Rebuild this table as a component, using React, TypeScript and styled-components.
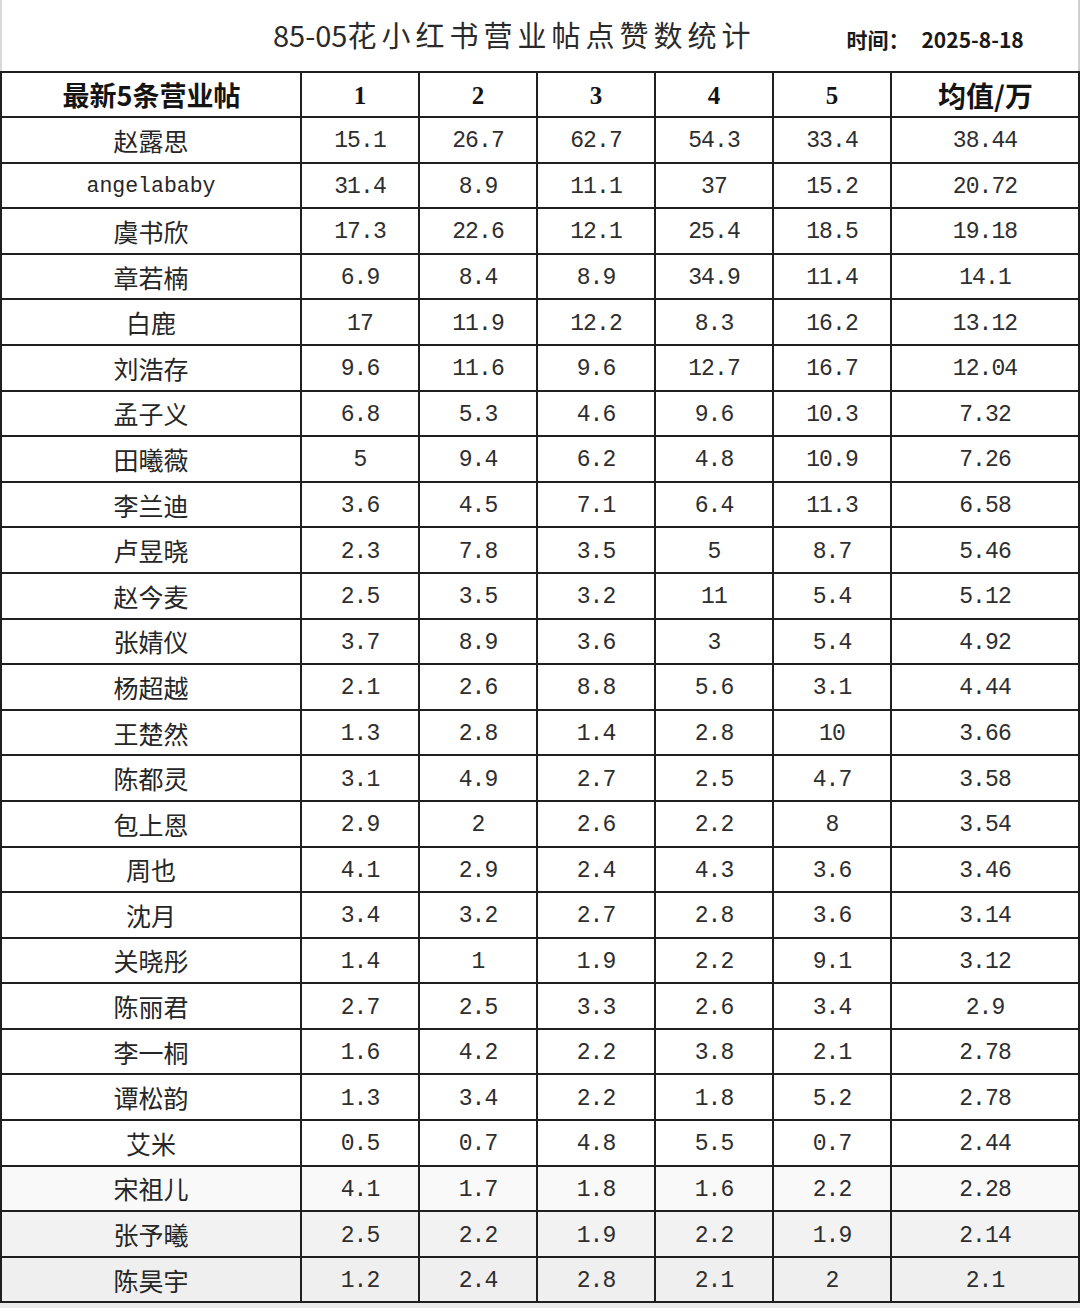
import React from "react";
import styled, { createGlobalStyle } from "styled-components";

const GlobalStyle = createGlobalStyle`
  html, body {
    margin: 0;
    padding: 0;
    background: #ffffff;
  }
  body {
    font-family: "Noto Sans CJK SC", "Noto Sans", sans-serif;
  }
`;

type Row = [string, string, string, string, string, string, string];

const rows: Row[] = [
  ["赵露思", "15.1", "26.7", "62.7", "54.3", "33.4", "38.44"],
  ["angelababy", "31.4", "8.9", "11.1", "37", "15.2", "20.72"],
  ["虞书欣", "17.3", "22.6", "12.1", "25.4", "18.5", "19.18"],
  ["章若楠", "6.9", "8.4", "8.9", "34.9", "11.4", "14.1"],
  ["白鹿", "17", "11.9", "12.2", "8.3", "16.2", "13.12"],
  ["刘浩存", "9.6", "11.6", "9.6", "12.7", "16.7", "12.04"],
  ["孟子义", "6.8", "5.3", "4.6", "9.6", "10.3", "7.32"],
  ["田曦薇", "5", "9.4", "6.2", "4.8", "10.9", "7.26"],
  ["李兰迪", "3.6", "4.5", "7.1", "6.4", "11.3", "6.58"],
  ["卢昱晓", "2.3", "7.8", "3.5", "5", "8.7", "5.46"],
  ["赵今麦", "2.5", "3.5", "3.2", "11", "5.4", "5.12"],
  ["张婧仪", "3.7", "8.9", "3.6", "3", "5.4", "4.92"],
  ["杨超越", "2.1", "2.6", "8.8", "5.6", "3.1", "4.44"],
  ["王楚然", "1.3", "2.8", "1.4", "2.8", "10", "3.66"],
  ["陈都灵", "3.1", "4.9", "2.7", "2.5", "4.7", "3.58"],
  ["包上恩", "2.9", "2", "2.6", "2.2", "8", "3.54"],
  ["周也", "4.1", "2.9", "2.4", "4.3", "3.6", "3.46"],
  ["沈月", "3.4", "3.2", "2.7", "2.8", "3.6", "3.14"],
  ["关晓彤", "1.4", "1", "1.9", "2.2", "9.1", "3.12"],
  ["陈丽君", "2.7", "2.5", "3.3", "2.6", "3.4", "2.9"],
  ["李一桐", "1.6", "4.2", "2.2", "3.8", "2.1", "2.78"],
  ["谭松韵", "1.3", "3.4", "2.2", "1.8", "5.2", "2.78"],
  ["艾米", "0.5", "0.7", "4.8", "5.5", "0.7", "2.44"],
  ["宋祖儿", "4.1", "1.7", "1.8", "1.6", "2.2", "2.28"],
  ["张予曦", "2.5", "2.2", "1.9", "2.2", "1.9", "2.14"],
  ["陈昊宇", "1.2", "2.4", "2.8", "2.1", "2", "2.1"],
];

const shades: Record<number, string> = {
  23: "#f9f9f9",
  24: "#f2f2f2",
  25: "#efefef",
};

const Page = styled.div`
  width: 1080px;
  min-height: 1308px;
  display: flex;
  flex-direction: column;
  background: #ffffff;
`;

const TitleBar = styled.div`
  height: 71px;
  box-sizing: border-box;
  border-left: 2px solid #d9d9d9;
  border-right: 2px solid #cfcfcf;
  display: flex;
  align-items: center;
  padding-left: 271px;
`;

const Title = styled.div`
  font-family: "Noto Sans CJK SC", "Noto Sans", sans-serif;
  font-size: 29px;
  font-weight: 400;
  color: #2a2a2a;
  line-height: 1;
  white-space: nowrap;
  padding-bottom: 2px;
`;

const TitleCjk = styled.span`
  letter-spacing: 5px;
`;

const DateLabel = styled.div`
  margin-left: 91px;
  padding-top: 8px;
  font-family: "Noto Sans CJK SC", "Noto Sans", sans-serif;
  font-size: 21px;
  font-weight: 700;
  color: #1a1a1a;
  line-height: 1;
  white-space: nowrap;
`;

const DateValue = styled.span`
  margin-left: 12px;
`;

const Grid = styled.div`
  display: grid;
  grid-template-columns: 298px repeat(5, 116px) 186px;
  grid-template-rows: 43px;
  grid-auto-rows: 43.6px;
  gap: 2px;
  padding: 2px;
  background: #1f1f1f;
`;

const Cell = styled.div<{ $bg?: string }>`
  background: ${(p) => p.$bg || "#ffffff"};
  display: flex;
  align-items: center;
  justify-content: center;
  overflow: hidden;
  white-space: nowrap;
`;

const HeadCjk = styled(Cell)<{ $size?: number }>`
  font-family: "Noto Sans CJK SC", "Noto Sans", sans-serif;
  font-size: ${(p) => p.$size || 27}px;
  font-weight: 700;
  color: #141414;
  padding-left: 1px;
`;

const HeadNum = styled(Cell)`
  font-family: "Liberation Serif", "Noto Sans CJK SC", serif;
  font-size: 25px;
  font-weight: 700;
  color: #141414;
  padding-top: 2px;
`;

const NameCell = styled(Cell)<{ $latin?: boolean }>`
  font-family: ${(p) =>
    p.$latin
      ? `"Liberation Mono", monospace`
      : `"Noto Sans CJK SC", "Noto Sans", sans-serif`};
  font-size: ${(p) => (p.$latin ? "21.5px" : "25px")};
  font-weight: 400;
  color: #262626;
  padding-top: ${(p) => (p.$latin ? "2px" : "0")};
`;

const NumCell = styled(Cell)`
  font-family: "Liberation Mono", monospace;
  font-size: 23px;
  letter-spacing: -0.9px;
  color: #2e2e2e;
  padding-top: 3px;
`;

const BottomStrip = styled.div`
  flex: 1;
  min-height: 4px;
  background: #e9e9e9;
`;

export default function App() {
  return (
    <>
      <GlobalStyle />
      <Page>
        <TitleBar>
          <Title>
            85-05<TitleCjk>花小红书营业帖点赞数统计</TitleCjk>
          </Title>
          <DateLabel>
            时间：<DateValue>2025-8-18</DateValue>
          </DateLabel>
        </TitleBar>
        <Grid>
          <HeadCjk>最新5条营业帖</HeadCjk>
          {["1", "2", "3", "4", "5"].map((n) => (
            <HeadNum key={n}>{n}</HeadNum>
          ))}
          <HeadCjk $size={28}>均值/万</HeadCjk>
          {rows.map((r, i) => (
            <React.Fragment key={r[0]}>
              <NameCell $bg={shades[i]} $latin={/^[a-z]/.test(r[0])}>
                {r[0]}
              </NameCell>
              {r.slice(1).map((v, j) => (
                <NumCell key={j} $bg={shades[i]}>
                  {v}
                </NumCell>
              ))}
            </React.Fragment>
          ))}
        </Grid>
        <BottomStrip />
      </Page>
    </>
  );
}
